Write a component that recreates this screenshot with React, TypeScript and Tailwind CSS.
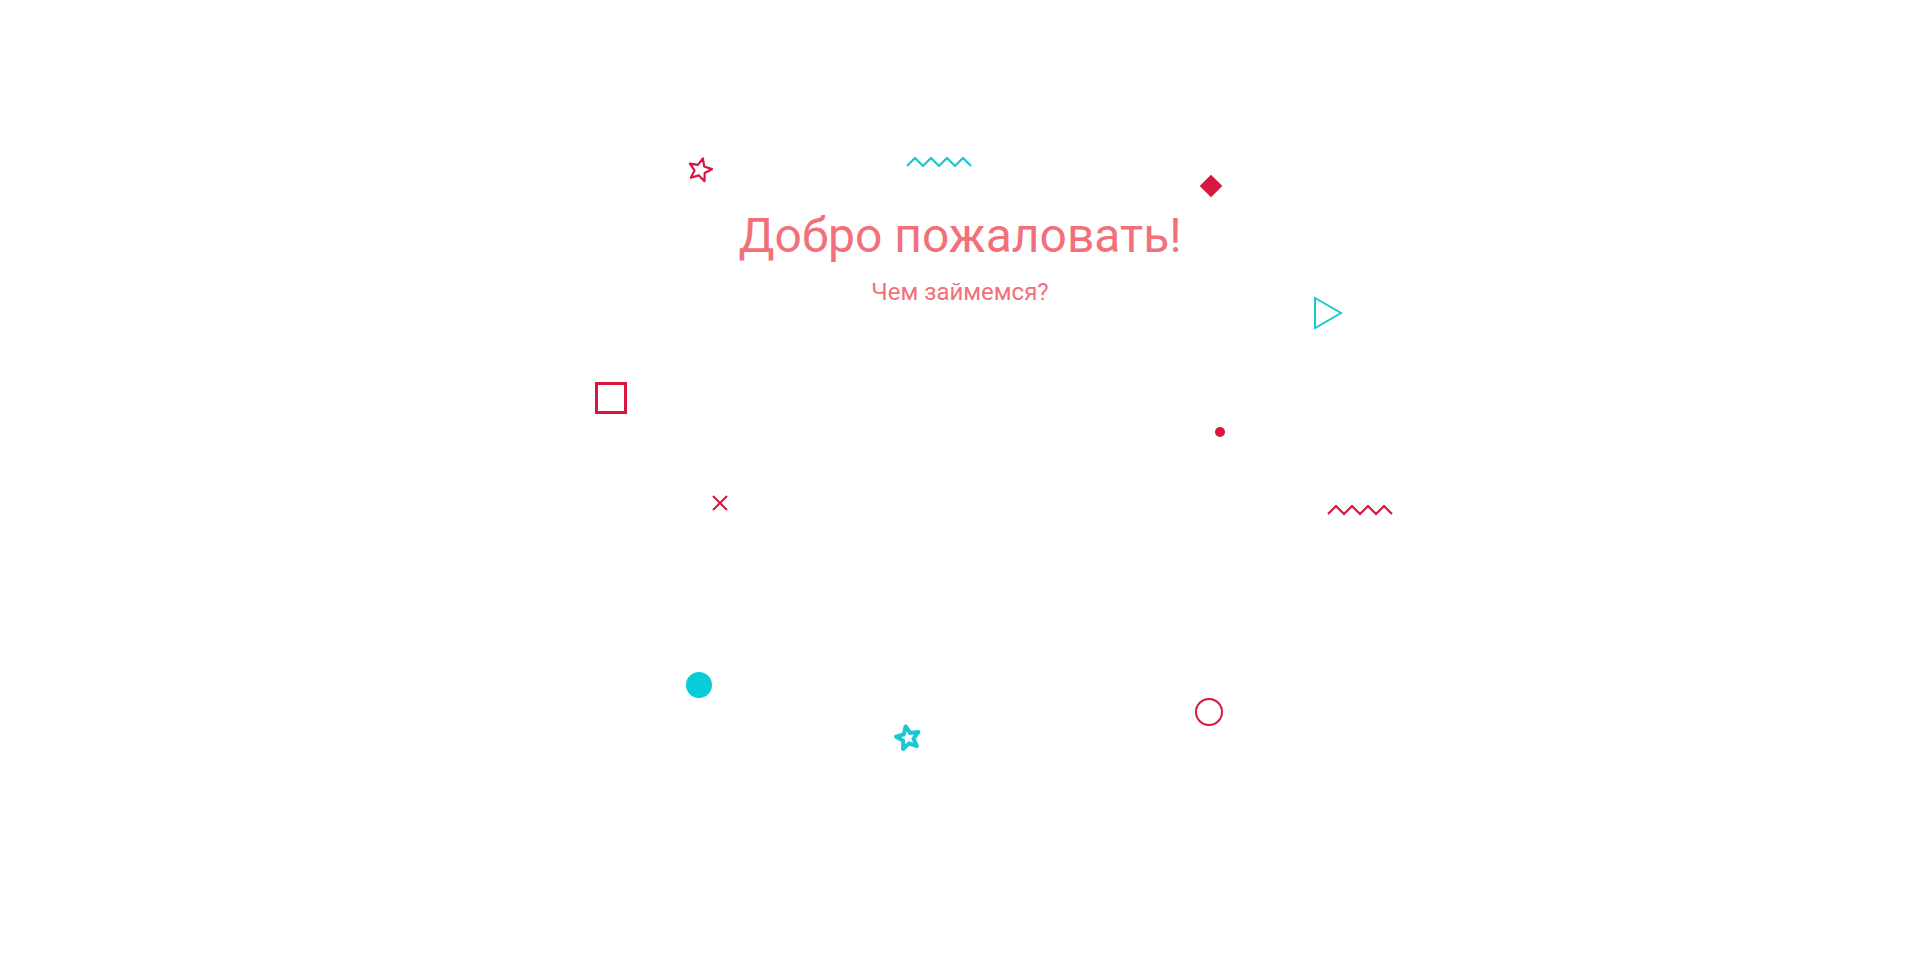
const STAR = '14,2 17.23,9.55 25.41,10.29 19.23,15.7 21.05,23.71 14,19.5 6.95,23.71 8.77,15.7 2.59,10.29 10.77,9.55'
const ZIGZAG = '1,9 9,1 17,9 25,1 33,9 41,1 49,9 57,1 65,9'

export default function App() {
  return (
    <div className="min-h-screen w-full bg-white" style={{ fontFamily: 'Roboto, "Noto Sans", sans-serif' }}>
      <div className="relative mx-auto h-[964px] w-[800px]">
        {/* heading */}
        <div className="flex flex-col items-center pt-[208px] text-[#f2707a]">
          <h1 className="text-[48px] leading-[56px] font-normal">Добро пожаловать!</h1>
          <p className="mt-[14px] text-[24px] leading-[28px]">Чем займемся?</p>
        </div>

        {/* decorations */}
        <svg className="absolute left-[126px] top-[156px] rotate-[14deg]" width="28" height="28" viewBox="0 0 28 28">
          <polygon points={STAR} fill="none" stroke="#d7173f" strokeWidth="2.2" strokeLinejoin="round" />
        </svg>

        <svg className="absolute left-[346px] top-[157px]" width="66" height="11" viewBox="0 0 66 11">
          <polyline points={ZIGZAG} fill="none" stroke="#18c9d3" strokeWidth="2.2" />
        </svg>

        <div className="absolute left-[643px] top-[178px] h-[16px] w-[16px] rotate-45 bg-[#d7173f]" />

        <svg className="absolute left-[753px] top-[296px]" width="30" height="34" viewBox="0 0 30 34">
          <polygon points="2,2 28,17 2,32" fill="none" stroke="#18c9d3" strokeWidth="2" />
        </svg>

        <div className="absolute left-[35px] top-[382px] h-[32px] w-[32px] border-[3.5px] border-[#d7173f]" />

        <div className="absolute left-[655px] top-[427px] h-[10px] w-[10px] rounded-full bg-[#d7173f]" />

        <svg className="absolute left-[151px] top-[494px]" width="18" height="18" viewBox="0 0 18 18">
          <path d="M2 2 L16 16 M16 2 L2 16" stroke="#d7173f" strokeWidth="2" />
        </svg>

        <svg className="absolute left-[767px] top-[505px]" width="66" height="11" viewBox="0 0 66 11">
          <polyline points={ZIGZAG} fill="none" stroke="#d7173f" strokeWidth="2.2" />
        </svg>

        <div className="absolute left-[126px] top-[672px] h-[26px] w-[26px] rounded-full bg-[#06cdd8]" />

        <svg className="absolute left-[334px] top-[724px] -rotate-[12deg]" width="28" height="28" viewBox="0 0 28 28">
          <polygon points={STAR} fill="none" stroke="#18c9d3" strokeWidth="4" strokeLinejoin="round" />
        </svg>

        <div className="absolute left-[635px] top-[698px] h-[28px] w-[28px] rounded-full border-[2.5px] border-[#d7173f]" />
      </div>
    </div>
  )
}
